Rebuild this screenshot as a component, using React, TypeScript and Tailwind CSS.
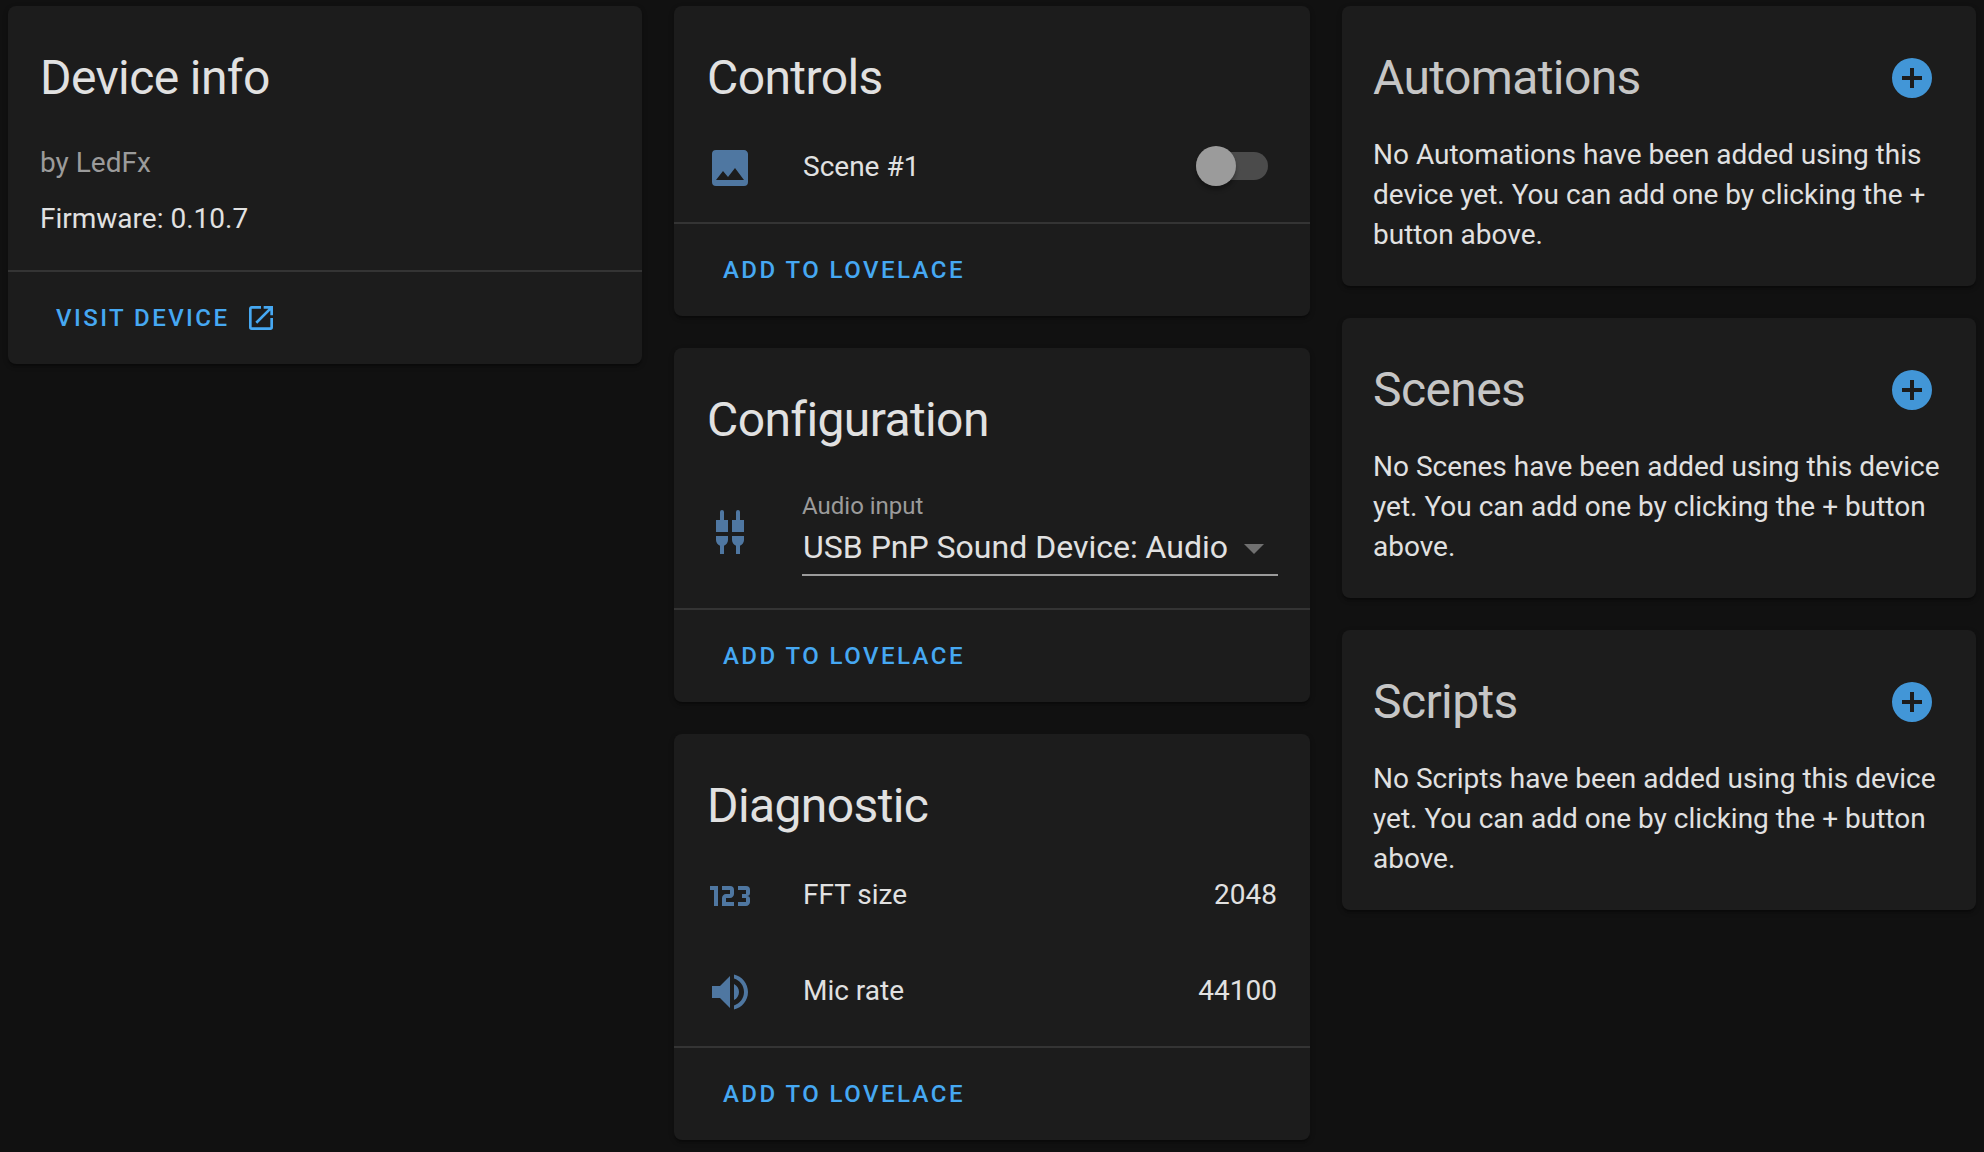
import type { ReactNode } from "react";

const PLUS_CIRCLE =
  "M17,13H13V17H11V13H7V11H11V7H13V11H17M12,2A10,10 0 0,0 2,12A10,10 0 0,0 12,22A10,10 0 0,0 22,12A10,10 0 0,0 12,2Z";
const OPEN_IN_NEW =
  "M14,3V5H17.59L7.76,14.83L9.17,16.24L19,6.41V10H21V3M19,19H5V5H12V3H5C3.89,3 3,3.9 3,5V19A2,2 0 0,0 5,21H19A2,2 0 0,0 21,19V12H19V19Z";
const IMAGE =
  "M8.5,13.5L11,16.5L14.5,12L19,18H5M21,19V5C21,3.89 20.1,3 19,3H5A2,2 0 0,0 3,5V19A2,2 0 0,0 5,21H19A2,2 0 0,0 21,19Z";
const AUDIO_INPUT =
  "M5,14V16C5,17.3 5.84,18.4 7,18.82V23H9V18.82C10.16,18.4 11,17.3 11,16V14H5M13,14V16C13,17.3 13.84,18.4 15,18.82V23H17V18.82C18.16,18.4 19,17.3 19,16V14H13M9,2A1,1 0 0,0 8,1A1,1 0 0,0 7,2V6H5V12H11V6H9V2M17,2A1,1 0 0,0 16,1A1,1 0 0,0 15,2V6H13V12H19V6H17V2Z";
const NUMERIC =
  "M4,17V9H2V7H6V17H4M22,15C22,16.11 21.1,17 20,17H16V15H20V13H18V11H20V9H16V7H20A2,2 0 0,1 22,9V10.5A1.5,1.5 0 0,1 20.5,12A1.5,1.5 0 0,1 22,13.5V15M14,15V17H8V13C8,11.89 8.9,11 10,11H12V9H8V7H12A2,2 0 0,1 14,9V11C14,12.11 13.1,13 12,13H10V15H14Z";
const VOLUME =
  "M14,3.23V5.29C16.89,6.15 19,8.83 19,12C19,15.17 16.89,17.84 14,18.7V20.77C18,19.86 21,16.28 21,12C21,7.72 18,4.14 14,3.23M16.5,12C16.5,10.23 15.5,8.71 14,7.97V16C15.5,15.29 16.5,13.76 16.5,12M3,9V15H7L12,20V4L7,9H3Z";

function Icon({ path, className }: { path: string; className: string }) {
  return (
    <svg viewBox="0 0 24 24" className={className} fill="currentColor" aria-hidden="true">
      <path d={path} />
    </svg>
  );
}

function Panel({ children }: { children: ReactNode }) {
  return (
    <section className="rounded-lg bg-[#1c1c1c] pt-6 shadow-[0_4px_2px_-2px_rgba(0,0,0,0.2),0_2px_2px_0_rgba(0,0,0,0.14),0_2px_6px_0_rgba(0,0,0,0.12)]">
      {children}
    </section>
  );
}

function Title({ children }: { children: ReactNode }) {
  return <h1 className="text-[48px] leading-[96px] tracking-[-0.0125em]">{children}</h1>;
}

function Actions({ children }: { children: ReactNode }) {
  return (
    <div className="flex h-[94px] items-center border-t-2 border-[#343434]">
      <button className="flex items-center text-[24px] font-medium tracking-[2.45px] text-[#46a8f2] uppercase">
        {children}
      </button>
    </div>
  );
}

function EntityCard({ title, children }: { title: string; children: ReactNode }) {
  return (
    <Panel>
      <div className="pl-[33px]">
        <Title>{title}</Title>
      </div>
      {children}
      <Actions>
        <span className="pl-[49px]">Add to Lovelace</span>
      </Actions>
    </Panel>
  );
}

function EntityRow({ icon, name, children }: { icon: string; name: string; children: ReactNode }) {
  return (
    <div className="flex h-20 items-center pr-[33px] pl-8">
      <Icon path={icon} className="mt-1 size-12 text-[#4f77a1]" />
      <span className="mt-0.5 ml-[49px] grow text-[28px] leading-10">{name}</span>
      {children}
    </div>
  );
}

function AddCard({ kind }: { kind: string }) {
  return (
    <Panel>
      <div className="flex h-24 items-center justify-between pr-10 pl-[31px] text-[#c6c6c6]">
        <Title>{kind}</Title>
        <button aria-label={`Add ${kind}`}>
          <Icon path={PLUS_CIRCLE} className="size-12 text-[#4296d7]" />
        </button>
      </div>
      <p className="pt-[9px] pr-8 pb-[31px] pl-[31px] text-[28px] leading-10">
        {`No ${kind} have been added using this device yet. You can add one by clicking the + button above.`}
      </p>
    </Panel>
  );
}

export default function App() {
  return (
    <main className="grid min-h-screen grid-cols-[634px_636px_634px] items-start gap-x-8 bg-[#111111] px-2 pt-1.5 font-[Roboto,sans-serif] text-[#e1e1e1]">
      <Panel>
        <div className="px-8">
          <Title>Device info</Title>
        </div>
        <div className="flex flex-col gap-4 px-8 pt-[17px] pb-[31px] text-[28px] leading-10">
          <span className="text-[#9b9b9b]">by LedFx</span>
          <span>Firmware: 0.10.7</span>
        </div>
        <Actions>
          <span className="pl-12">Visit device</span>
          <Icon path={OPEN_IN_NEW} className="ml-4 size-8" />
        </Actions>
      </Panel>

      <div className="flex flex-col gap-8">
        <EntityCard title="Controls">
          <div className="pb-4">
            <EntityRow icon={IMAGE} name="Scene #1">
              <button
                role="switch"
                aria-checked="false"
                aria-label="Scene #1"
                className="mr-[9px] flex h-7 w-[72px] items-center rounded-full bg-[#4b4b4b]"
              >
                <span className="size-10 shrink-0 rounded-full bg-[#9b9b9b] shadow-[0_4px_4px_0_rgba(0,0,0,0.3)]" />
              </button>
            </EntityRow>
          </div>
        </EntityCard>

        <EntityCard title="Configuration">
          <div className="flex h-[140px] items-start px-8">
            <Icon path={AUDIO_INPUT} className="mt-10 size-12 text-[#4f77a1]" />
            <div className="ml-12 flex h-[108px] grow flex-col border-b-2 border-[#9b9b9b]">
              <span className="pt-[22px] text-[24px] leading-8 text-[#9b9b9b]">Audio input</span>
              <span className="flex items-center justify-between pr-3.5 pl-px">
                <span className="text-[32px] leading-[50px]">USB PnP Sound Device: Audio</span>
                <svg viewBox="0 0 20 10" className="mt-1 h-2.5 w-5" fill="#707070" aria-hidden="true">
                  <path d="M0 0H20L10 10Z" />
                </svg>
              </span>
            </div>
          </div>
        </EntityCard>

        <EntityCard title="Diagnostic">
          <div className="flex flex-col gap-4 pb-4">
            <EntityRow icon={NUMERIC} name="FFT size">
              <span className="mt-0.5 text-[28px] leading-10">2048</span>
            </EntityRow>
            <EntityRow icon={VOLUME} name="Mic rate">
              <span className="mt-0.5 text-[28px] leading-10">44100</span>
            </EntityRow>
          </div>
        </EntityCard>
      </div>

      <div className="flex flex-col gap-8">
        <AddCard kind="Automations" />
        <AddCard kind="Scenes" />
        <AddCard kind="Scripts" />
      </div>
    </main>
  );
}
